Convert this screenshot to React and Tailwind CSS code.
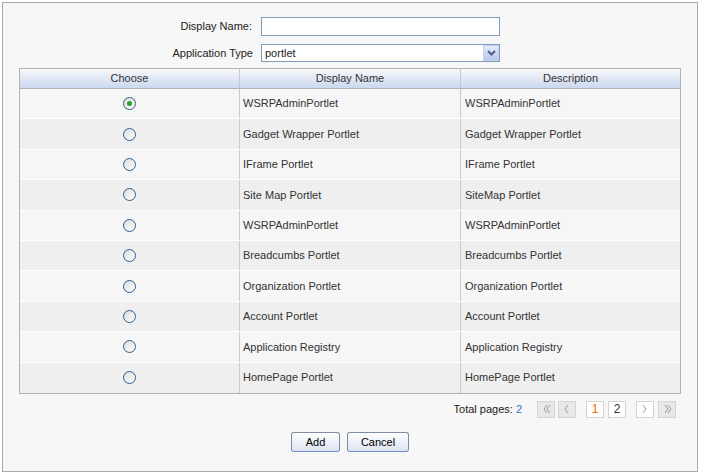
import React, { useState } from 'react';

const portlets = [
  'WSRPAdminPortlet',
  'Gadget Wrapper Portlet',
  'IFrame Portlet',
  'Site Map Portlet',
  'WSRPAdminPortlet',
  'Breadcumbs Portlet',
  'Organization Portlet',
  'Account Portlet',
  'Application Registry',
  'HomePage Portlet',
];

const descriptions = [
  'WSRPAdminPortlet',
  'Gadget Wrapper Portlet',
  'IFrame Portlet',
  'SiteMap Portlet',
  'WSRPAdminPortlet',
  'Breadcumbs Portlet',
  'Organization Portlet',
  'Account Portlet',
  'Application Registry',
  'HomePage Portlet',
];

const Radio = ({ checked, onClick }) => (
  <button
    onClick={onClick}
    className="w-[13px] h-[13px] rounded-full border border-[#2f5d8e] bg-gradient-to-br from-[#dcdcd6] to-white flex items-center justify-center"
  >
    {checked && <span className="w-[5px] h-[5px] rounded-full bg-[#2aa12a]"></span>}
  </button>
);

const Chevron = ({ dir, double }) => {
  const pts = dir === 'left' ? '6,3 3,7 6,11' : '3,3 6,7 3,11';
  return (
    <svg width="10" height="14" viewBox="0 0 10 14">
      <polyline points={pts} fill="none" stroke="#9a9a9a" strokeWidth="1" />
      {double && (
        <polyline
          points={dir === 'left' ? '9,3 6,7 9,11' : '6,3 9,7 6,11'}
          fill="none"
          stroke="#9a9a9a"
          strokeWidth="1"
        />
      )}
    </svg>
  );
};

const PageBtn = ({ children, gray }) => (
  <div
    className={`w-[18px] h-[17px] border border-[#d4d4d4] flex items-center justify-center ${
      gray ? 'bg-[#e8e8e8]' : 'bg-white'
    }`}
  >
    {children}
  </div>
);

const App = () => {
  const [selected, setSelected] = useState(0);

  return (
    <div className="min-h-screen bg-white pt-[2px] pl-[2px] text-[11px] text-[#222]" style={{ fontFamily: '"Liberation Sans", Arial, sans-serif' }}>
      <div className="w-[696px] h-[470px] border border-[#a9a9a9] bg-[#f7f7f7] pt-[14px]">
        {/* form */}
        <div className="flex items-center">
          <div className="w-[249px] text-right">Display Name:</div>
          <input className="ml-[9px] w-[239px] h-[19px] border border-[#7f9db9] bg-white outline-none px-1" />
        </div>
        <div className="flex items-center mt-[8px]">
          <div className="w-[250px] text-right">Application Type</div>
          <div className="ml-[8px] w-[239px] h-[18px] border border-[#7f9db9] bg-white flex items-center justify-between">
            <span className="pl-[3px]">portlet</span>
            <div className="w-[16px] h-[16px] bg-gradient-to-b from-[#e3eafa] to-[#b9c9ee] border border-[#c4d2f0] flex items-center justify-center">
              <svg width="9" height="6" viewBox="0 0 9 6">
                <polyline points="1,1 4.5,4.5 8,1" fill="none" stroke="#4d6185" strokeWidth="2" />
              </svg>
            </div>
          </div>
        </div>

        {/* table */}
        <div className="ml-[16px] mt-[6px] w-[662px] border border-[#b2b2b2]">
          <div className="grid grid-cols-[219px_221px_220px] h-[20px] border-b border-[#b2b2b2] bg-gradient-to-b from-[#f7f8fb] to-[#cbd8ef] text-[#333]">
            <div className="flex items-center justify-center">Choose</div>
            <div className="flex items-center justify-center border-l border-[#c8c8c8]">Display Name</div>
            <div className="flex items-center justify-center border-l border-[#c8c8c8]">Description</div>
          </div>
          {portlets.map((name, i) => (
            <div
              key={i}
              className={`grid grid-cols-[219px_221px_220px] h-[30.4px] text-[#333] ${
                i < portlets.length - 1 ? 'border-b border-white' : ''
              } ${i % 2 === 0 ? 'bg-[#f6f6f6]' : 'bg-[#efefef]'}`}
            >
              <div className="flex items-center justify-center">
                <Radio checked={selected === i} onClick={() => setSelected(i)} />
              </div>
              <div className="flex items-center pl-[3px] border-l border-[#cacaca]">{name}</div>
              <div className="flex items-center pl-[4px] border-l border-[#cacaca]">{descriptions[i]}</div>
            </div>
          ))}
        </div>

        {/* pagination */}
        <div className="flex justify-end items-center mt-[7px] mr-[21px]">
          <span className="text-[#222]">Total pages:</span>
          <span className="ml-[3px] text-[#3a72c8]">2</span>
          <div className="flex items-center ml-[15px]">
            <PageBtn gray><Chevron dir="left" double /></PageBtn>
            <div className="ml-[3px]"><PageBtn gray><Chevron dir="left" /></PageBtn></div>
            <div className="ml-[10px]"><PageBtn><span className="text-[12px] text-[#ff6600]">1</span></PageBtn></div>
            <div className="ml-[4px]"><PageBtn><span className="text-[12px] text-[#333]">2</span></PageBtn></div>
            <div className="ml-[10px]"><PageBtn><Chevron dir="right" /></PageBtn></div>
            <div className="ml-[4px]"><PageBtn gray><Chevron dir="right" double /></PageBtn></div>
          </div>
        </div>

        {/* buttons */}
        <div className="flex justify-center gap-[7px] mt-[14px]">
          <button className="w-[49px] h-[20px] rounded-[3px] border border-[#7d8ca3] border-b-[#6f8fd0] bg-gradient-to-b from-white to-[#dde3f2] text-black">
            Add
          </button>
          <button className="w-[62px] h-[20px] rounded-[3px] border border-[#7d8ca3] border-b-[#6f8fd0] bg-gradient-to-b from-white to-[#dde3f2] text-black">
            Cancel
          </button>
        </div>
      </div>
    </div>
  );
};

export default App;
